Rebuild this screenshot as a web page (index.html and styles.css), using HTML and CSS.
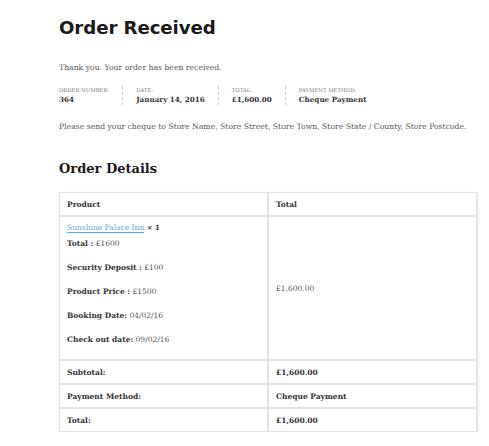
FILE: index.html
```html
<!DOCTYPE html>
<html lang="en">
<head>
    <meta charset="UTF-8">
    <meta name="viewport" content="width=device-width, initial-scale=1.0">
    <title>Order Received</title>
    <link rel="stylesheet" href="styles.css">
</head>
<body>
    <div class="page">
        <h1 class="pageTitle">Order Received</h1>
        <p class="thanks">Thank you. Your order has been received.</p>

        <ul class="overview">
            <li class="overviewItem">
                <span class="overviewLabel">Order Number:</span>
                <strong>364</strong>
            </li>
            <li class="overviewItem">
                <span class="overviewLabel">Date:</span>
                <strong>January 14, 2016</strong>
            </li>
            <li class="overviewItem">
                <span class="overviewLabel">Total:</span>
                <strong>£1,600.00</strong>
            </li>
            <li class="overviewItem last">
                <span class="overviewLabel">Payment Method:</span>
                <strong>Cheque Payment</strong>
            </li>
        </ul>

        <p class="note">Please send your cheque to Store Name, Store Street, Store Town, Store State / County, Store Postcode.</p>

        <h2 class="sectionTitle">Order Details</h2>

        <table class="orderTable">
            <thead>
                <tr>
                    <th>Product</th>
                    <th>Total</th>
                </tr>
            </thead>
            <tbody>
                <tr>
                    <td class="productCell">
                        <a href="#" class="productLink">Sunshine Palace Inn</a> <strong class="qty">× 1</strong>
                        <p class="meta first"><strong>Total :</strong> £1600</p>
                        <p class="meta"><strong>Security Deposit :</strong> £100</p>
                        <p class="meta"><strong>Product Price :</strong> £1500</p>
                        <p class="meta"><strong>Booking Date:</strong> 04/02/16</p>
                        <p class="meta"><strong>Check out date:</strong> 09/02/16</p>
                    </td>
                    <td>£1,600.00</td>
                </tr>
            </tbody>
            <tfoot>
                <tr>
                    <th>Subtotal:</th>
                    <td><strong>£1,600.00</strong></td>
                </tr>
                <tr>
                    <th>Payment Method:</th>
                    <td><strong>Cheque Payment</strong></td>
                </tr>
                <tr>
                    <th>Total:</th>
                    <td><strong>£1,600.00</strong></td>
                </tr>
            </tfoot>
        </table>
    </div>
</body>
</html>
```

FILE: styles.css
```css
body {
    margin: 0;
    background-color: #fff;
    font-family: "DejaVu Serif", Georgia, serif;
    font-size: 7.7px;
    color: #555;
}
.page {
    padding: 17px 12px 0 59px;
}
.pageTitle {
    font-family: "DejaVu Sans", Arial, sans-serif;
    font-size: 18.2px;
    font-weight: bold;
    color: #1a1a1a;
    margin: 0;
    letter-spacing: -0.1px;
}
.thanks {
    margin: 25px 0 0;
}
.overview {
    list-style: none;
    margin: 14px 0 0;
    padding: 0;
    display: flex;
}
.overviewItem {
    display: flex;
    flex-direction: column;
    padding-right: 13px;
    margin-right: 13px;
    border-right: 1px dashed #ccc;
    line-height: 11px;
}
.overviewItem.last {
    border-right: none;
}
.overviewLabel {
    font-size: 5.3px;
    text-transform: uppercase;
    color: #777;
    line-height: 8px;
}
.overviewItem strong {
    color: #333;
    font-size: 7.2px;
    font-weight: 600;
}
.note {
    margin: 17px 0 0;
}
.sectionTitle {
    font-size: 13px;
    font-weight: bold;
    color: #1a1a1a;
    margin: 30px 0 0;
}
.orderTable {
    margin-top: 16px;
    width: 418px;
    border-collapse: separate;
    border-spacing: 0;
    box-shadow: 1px 1px 2px rgba(0, 0, 0, 0.12);
    border: 1px solid #e2e2e2;
}
.orderTable th,
.orderTable td {
    text-align: left;
    vertical-align: middle;
    padding: 0 7px;
    height: 22px;
    border-bottom: 2px solid #e2e2e2;
    font-size: 7.5px;
}
.orderTable tfoot tr:last-child th,
.orderTable tfoot tr:last-child td {
    border-bottom: none;
}
.orderTable th {
    width: 193px;
    border-right: 2px solid #e2e2e2;
    color: #333;
    font-weight: 600;
}
.orderTable thead th:last-child {
    border-right: none;
}
.orderTable td strong {
    color: #333;
    font-weight: 600;
}
.orderTable td:first-child {
    border-right: 2px solid #e2e2e2;
}
.productCell {
    padding: 5px 7px 13px !important;
    vertical-align: top !important;
    line-height: 12px;
}
.productLink {
    color: #6a9fd4;
    text-decoration: none;
    border-bottom: 1px solid #5aaee8;
}
.qty {
    font-size: 7px;
}
.meta {
    margin: 12px 0 0;
    line-height: 12px;
}
.meta.first {
    margin-top: 4px;
}
```
